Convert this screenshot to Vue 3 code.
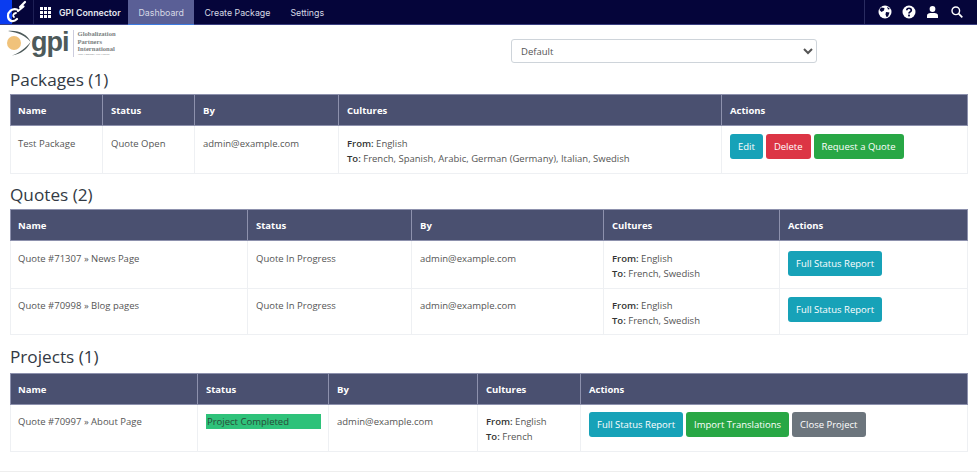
<script setup>
const iconDots = Array.from({ length: 9 }, (_, i) => ({ x: (i % 3) * 4, y: Math.floor(i / 3) * 4 }))

const sections = [
  {
    title: 'Packages (1)', cols: [92, 92, 144, 383, 246], cls: 'packages',
    rows: [{ name: 'Test Package', status: 'Quote Open', to: 'French, Spanish, Arabic, German (Germany), Italian, Swedish',
      actions: [['Edit', 'info'], ['Delete', 'danger'], ['Request a Quote', 'success']] }]
  },
  {
    title: 'Quotes (2)', cols: [237, 164, 192, 176, 188], cls: 'quotes',
    rows: [
      { name: 'Quote #71307 » News Page', status: 'Quote In Progress', to: 'French, Swedish', actions: [['Full Status Report', 'info']] },
      { name: 'Quote #70998 » Blog pages', status: 'Quote In Progress', to: 'French, Swedish', actions: [['Full Status Report', 'info']] }
    ]
  },
  {
    title: 'Projects (1)', cols: [187, 131, 149, 103, 387], cls: 'projects',
    rows: [{ name: 'Quote #70997 » About Page', status: 'Project Completed', done: true, to: 'French',
      actions: [['Full Status Report', 'info'], ['Import Translations', 'success'], ['Close Project', 'secondary']] }]
  }
]
</script>

<template>
  <div class="page">
    <nav class="nav">
      <div class="brand">
        <svg width="33" height="24" viewBox="0 0 33 24">
          <rect width="12" height="24" fill="#0a3cf0" />
          <path d="M25 2 L20 7 M23.5 6.5 L18 11 M17 9.5 C12 8 8 12 8 16 C8 21 13 23 17 19" fill="none" stroke="#fff" stroke-width="2.2" stroke-linecap="round" />
          <path d="M16 13 C13 13.5 12.5 16 14 17" fill="none" stroke="#fff" stroke-width="1.8" stroke-linecap="round" />
        </svg>
      </div>
      <div class="app">
        <svg width="11" height="11" viewBox="0 0 11 11">
          <rect v-for="(d, i) in iconDots" :key="i" :x="d.x" :y="d.y" width="3" height="3" fill="#fff" />
        </svg>
        <span class="app-name">GPI Connector</span>
      </div>
      <a class="tab active">Dashboard</a>
      <a class="tab">Create Package</a>
      <a class="tab">Settings</a>
      <div class="tools">
        <svg width="14" height="14" viewBox="0 0 14 14">
          <circle cx="7" cy="7" r="6.5" fill="#fff" />
          <path d="M3 2.5 L6.5 3 L6 5.5 L3.5 7 L1.5 5 Z M8 7 L11.5 7.5 L10 11.5 L8.5 12 L7.5 9.5 Z M9 1.5 L12 4 L10 4.5 Z" fill="#05053a" />
        </svg>
        <svg width="14" height="14" viewBox="0 0 14 14">
          <circle cx="7" cy="7" r="6.5" fill="#fff" />
          <path d="M4.8 5.3 C4.8 2.6 9.3 2.6 9.3 5.2 C9.3 6.9 7 6.8 7 8.5" fill="none" stroke="#05053a" stroke-width="1.7" />
          <rect x="6.1" y="9.6" width="1.8" height="1.8" fill="#05053a" />
        </svg>
        <svg width="13" height="12" viewBox="0 0 13 12">
          <circle cx="6.5" cy="3" r="2.9" fill="#fff" />
          <path d="M1 12 L1 9.5 C1 7.5 3 7 6.5 7 C10 7 12 7.5 12 9.5 L12 12 Z" fill="#fff" />
        </svg>
        <svg class="search" width="12" height="12" viewBox="0 0 12 12">
          <circle cx="4.8" cy="4.8" r="3.8" fill="none" stroke="#fff" stroke-width="1.4" />
          <path d="M7.6 7.6 L11.3 11.3" stroke="#fff" stroke-width="1.7" />
        </svg>
      </div>
    </nav>

    <header class="top">
      <div class="logo">
        <svg width="24" height="26" viewBox="0 0 24 26">
          <path d="M1 1 C12 0 21 5 23.5 12 C19 6 11 2.5 1 1 Z" fill="#4d5a5a" />
          <path d="M23.5 12 C21 19 14 24 5 25.5 C12 23 19 18 23.5 12 Z" fill="#4d5a5a" />
          <circle cx="7" cy="13" r="7" fill="#f0c27a" />
        </svg>
        <span class="logo-gpi">gpi</span>
        <span class="logo-text">
          <span>Globalization</span>
          <span>Partners</span>
          <span>International</span>
          <small>Your Language. Our Canvas.</small>
        </span>
      </div>
      <select class="picker"><option>Default</option></select>
    </header>

    <section v-for="s in sections" :key="s.title" class="section" :class="s.cls">
      <h2 class="heading">{{ s.title }}</h2>
      <table class="grid">
        <colgroup>
          <col v-for="(w, i) in s.cols" :key="i" :style="{ width: w + 'px' }" />
        </colgroup>
        <thead>
          <tr>
            <th>Name</th><th>Status</th><th>By</th><th>Cultures</th><th>Actions</th>
          </tr>
        </thead>
        <tbody>
          <tr v-for="r in s.rows" :key="r.name">
            <td>{{ r.name }}</td>
            <td><span :class="{ done: r.done }">{{ r.status }}</span></td>
            <td>admin@example.com</td>
            <td class="cultures">
              <div><b>From:</b> English</div>
              <div><b>To:</b> {{ r.to }}</div>
            </td>
            <td class="actions">
              <button v-for="a in r.actions" :key="a[0]" class="btn" :class="a[1]">{{ a[0] }}</button>
            </td>
          </tr>
        </tbody>
      </table>
    </section>
    <div class="foot"></div>
  </div>
</template>

<style>
html, body { margin: 0; background: #fff; }
</style>

<style scoped>
.page {
  width: 977px;
  height: 476px;
  overflow: hidden;
  font-family: "Open Sans", "Noto Sans", sans-serif;
  font-size: 9.5px;
  color: #555;
  display: flex;
  flex-direction: column;
}
.nav {
  height: 24px;
  flex: none;
  display: flex;
  align-items: stretch;
  background: #05053a;
  border-bottom: 1px solid #3a3f80;
  font-family: Inter, sans-serif;
  font-size: 8.8px;
  color: #d6d8e4;
}
.brand { width: 33px; border-right: 1px solid #1e2055; display: flex; }
.app { width: 94px; display: flex; align-items: center; padding-left: 6px; box-sizing: border-box; gap: 8px; }
.app-name { font-weight: 600; color: #e4e5ee; white-space: nowrap; }
.tab { padding: 0 10px; display: flex; align-items: center; }
.tab.active { padding: 0 10.5px; background: #5a5f96; border-bottom: 1px solid #3d7be0; margin-bottom: -1px; }
.tools {
  margin-left: auto;
  width: 113px;
  box-sizing: border-box;
  border-left: 1px solid #2a2c60;
  display: flex;
  align-items: center;
  gap: 10px;
  padding-left: 13px;
}
.search { margin-left: 2px; }
.top { height: 34px; flex: none; position: relative; display: flex; align-items: flex-start; }
.logo { margin: 5px 0 0 7px; display: flex; align-items: flex-start; color: #4d5a5a; }
.logo-gpi {
  font-family: "Liberation Sans", sans-serif;
  font-size: 27px;
  font-weight: 700;
  line-height: 20px;
  letter-spacing: -1px;
  margin-top: 2px;
}
.logo-text {
  margin-left: 4px;
  padding-left: 4px;
  border-left: 1px solid #ccd;
  font-family: "Liberation Serif", serif;
  font-size: 6.6px;
  line-height: 7.5px;
  font-weight: 700;
  color: #7a8080;
  display: flex;
  flex-direction: column;
}
.logo-text small { font-size: 2.8px; line-height: 4px; font-weight: 400; }
.picker {
  position: absolute;
  left: 511px;
  top: 14px;
  width: 306px;
  height: 24px;
  border: 1px solid #ced4da;
  border-radius: 3px;
  background: #fff;
  padding: 0 0 0 5px;
  font-family: inherit;
  font-size: 9.5px;
  color: #555;
}
.section { padding: 0 10px; }
.heading {
  margin: 0;
  font-size: 17.2px;
  font-weight: 400;
  line-height: 25px;
  color: #333a44;
}
.packages .heading { padding-top: 8px; padding-bottom: 2px; }
.quotes { margin-top: 7px; }
.quotes .heading { padding-top: 1px; padding-bottom: 2px; }
.projects { margin-top: 9px; }
.projects .heading { padding-bottom: 4px; }
.grid {
  width: 957px;
  table-layout: fixed;
  border-collapse: collapse;
}
th {
  height: 31px;
  box-sizing: border-box;
  background: #4a5070;
  color: #fff;
  text-align: left;
  font-weight: 700;
  padding: 0 7px 0 8px;
  border: 1px solid #8d91ad;
}
td {
  vertical-align: top;
  padding: 10px 7px 0 8px;
  border: 1px solid #eef0f3;
  line-height: 15px;
  white-space: nowrap;
  height: 47px;
  box-sizing: border-box;
}
th:first-child, td:first-child { padding-left: 7px; }
.packages td { height: 48px; }
.quotes tr:first-child td { height: 48px; }
.quotes tr:last-child td { height: 46px; padding-top: 9px; }
.projects td { padding-top: 9px; }
td.cultures { color: #555; }
td.cultures b { color: #333; font-weight: 600; }
.packages td.actions { padding-top: 8px; }
.quotes tr:first-child td.actions { padding-top: 10px; }
.quotes tr:last-child td.actions { padding-top: 8px; }
.projects td.actions { padding-top: 7px; }
.done {
  display: block;
  box-sizing: border-box;
  background: #2ec27a;
  color: #2a4a38;
  height: 15px;
  width: 115px;
  padding-left: 1px;
  line-height: 15px;
}
.btn {
  height: 25px;
  border: 1px solid transparent;
  border-radius: 3px;
  padding: 0 7px;
  margin-right: 3px;
  font-family: inherit;
  font-size: 9.5px;
  color: #fff;
  vertical-align: top;
}
.info { background: #17a2b8; }
.danger { background: #dc3545; }
.success { background: #28a745; }
.secondary { background: #6c757d; }
.foot { margin-top: 19px; border-top: 1px solid #eee; }
</style>
